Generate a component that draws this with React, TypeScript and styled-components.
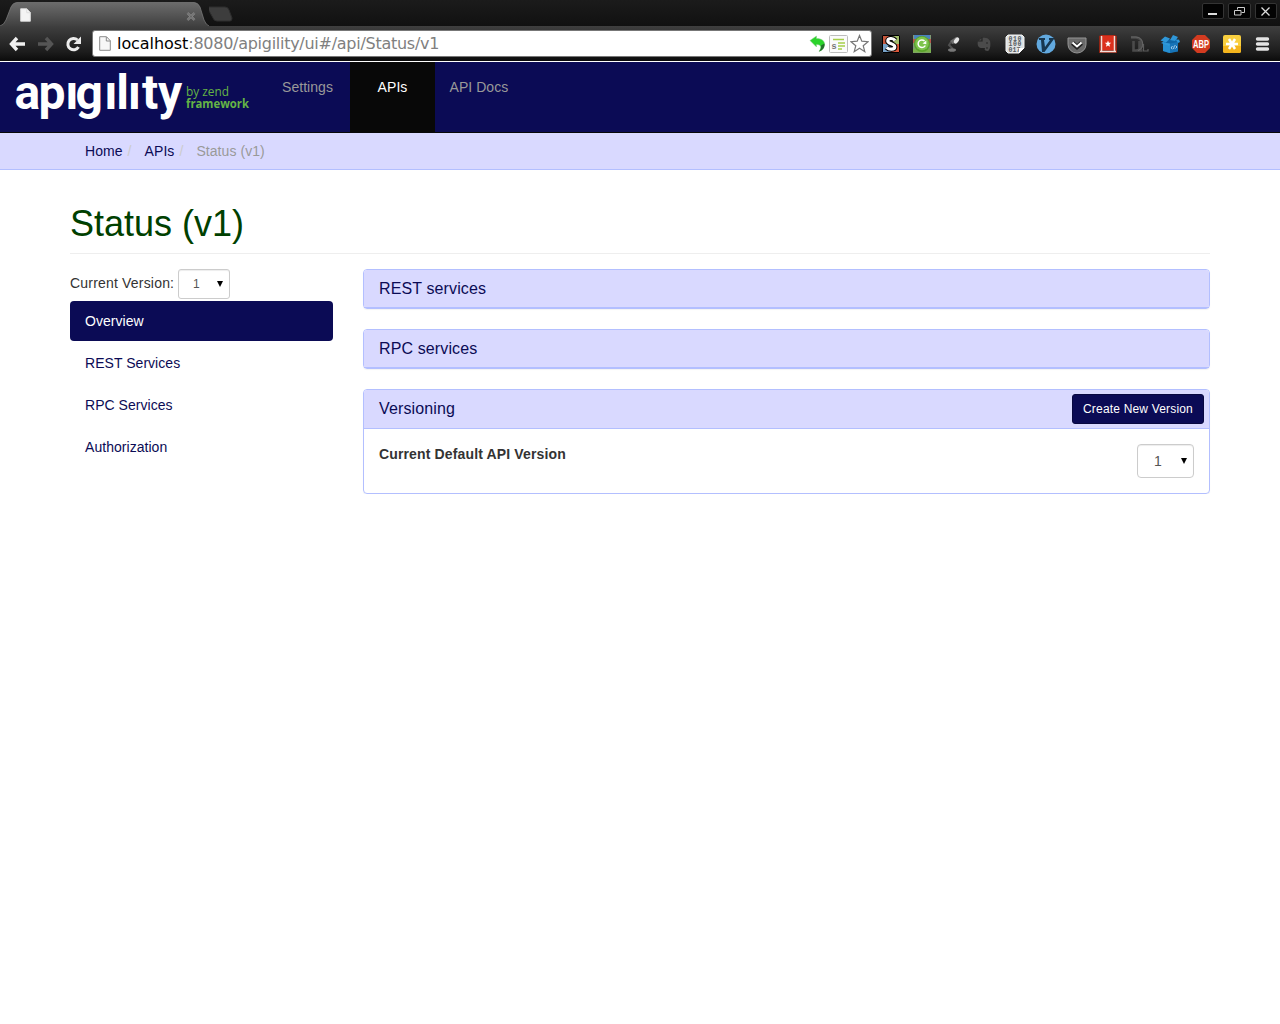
import React from "react";
import styled, { createGlobalStyle, css } from "styled-components";

const navy = "#0b0b55";
const lilac = "#d9d9ff";
const edge = "#b3bfff";

const GlobalStyle = createGlobalStyle`
  *, *::before, *::after { box-sizing: border-box; }
  body {
    margin: 0;
    background: #fff;
    color: #333;
    font: 14px/20px "Liberation Sans", Arial, sans-serif;
  }
  a { text-decoration: none; color: ${navy}; }
  svg { display: block; flex: none; }
`;

/* ---------- browser window ---------- */

const TabStrip = styled.div`
  display: flex;
  justify-content: space-between;
  height: 26px;
  background: linear-gradient(#1b1b1b, #111);
`;
const TabGroup = styled.div`
  display: flex;
`;
const Tab = styled.div`
  position: relative;
  width: 209px;
  height: 26px;
`;
const TabContent = styled.div`
  position: absolute;
  inset: 0;
  display: flex;
  justify-content: space-between;
  padding: 8px 13px 0 20px;
`;
const WindowButtons = styled.div`
  display: flex;
  gap: 4px;
  padding: 3px 3px 0 0;
`;
const WindowButton = styled.div`
  display: flex;
  align-items: center;
  justify-content: center;
  width: 22.5px;
  height: 16px;
  border: 1px solid #343434;
  border-radius: 2px;
  background: #030303;
`;
const Toolbar = styled.div`
  display: flex;
  height: 36px;
  padding: 4px 0 0 8px;
  background: linear-gradient(#3f3f3f, #1c1c1c 26px, #0d0d0d 34px);
  border-bottom: 1px solid #fff;
`;
const ToolbarButtons = styled.div`
  display: flex;
  gap: 8px;
  width: 84px;
  padding-top: 4px;
`;
const AddressBar = styled.div`
  display: flex;
  align-items: center;
  width: 780px;
  height: 27px;
  padding: 0 2px 0 6px;
  background: #fff;
  border: 1px solid #777;
  border-radius: 3px;
  font: 16px "DejaVu Sans", sans-serif;
  color: #808080;
`;
const Url = styled.div`
  flex: 1;
  padding: 0 0 1px 6px;
  white-space: nowrap;
  letter-spacing: -0.27px;
`;
const Host = styled.span`
  color: #000;
  letter-spacing: -0.06px;
`;
const AddressActions = styled.div`
  display: flex;
  gap: 2px;
`;
const Extensions = styled.div`
  display: flex;
  margin-left: 3px;
`;
const ExtensionSlot = styled.div`
  display: flex;
  justify-content: center;
  width: 31px;
  padding-top: 3.5px;
`;

/* ---------- application ---------- */

const NavBar = styled.nav`
  display: flex;
  height: 71px;
  background: ${navy};
  border-bottom: 1px solid #080808;
`;
const Brand = styled.a`
  width: 267px;
`;
const NavItem = styled.a<{ $active?: boolean }>`
  padding: 15px;
  color: #999;
  letter-spacing: 0.05px;
  ${(p) =>
    p.$active &&
    css`
      width: 85px;
      margin-left: 1.5px;
      padding: 15px 0 15px 1px;
      text-align: center;
      color: #fff;
      background: #080808;
    `}
`;
const BreadcrumbBar = styled.div`
  height: 37px;
  padding: 8px 85px;
  background: ${lilac};
  border-bottom: 1px solid ${edge};
`;
const Breadcrumbs = styled.div`
  display: flex;
  letter-spacing: 0.06px;
`;
const Separator = styled.span`
  width: 22px;
  padding-left: 5px;
  color: #ccc;
`;
const Current = styled.span`
  color: #999;
`;
const Page = styled.main`
  width: 1140px;
  margin: 0 auto;
`;
const Title = styled.h1`
  height: 84px;
  margin: 0 0 15px;
  padding-top: 34px;
  border-bottom: 1px solid #eee;
  font-size: 36px;
  line-height: 40px;
  font-weight: 500;
  color: #004000;
`;
const Columns = styled.div`
  display: grid;
  grid-template-columns: 263px 847px;
  column-gap: 30px;
`;
const VersionRow = styled.div`
  display: flex;
  height: 32px;
  line-height: 28px;
`;
const VersionLabel = styled.span`
  width: 108px;
  letter-spacing: 0.19px;
`;
const SelectBox = styled.div<{ $small?: boolean }>`
  display: flex;
  align-items: center;
  justify-content: space-between;
  width: ${(p) => (p.$small ? 52 : 57)}px;
  height: ${(p) => (p.$small ? 30 : 34)}px;
  padding: 0 5px 0 ${(p) => (p.$small ? 14 : 16)}px;
  border: 1px solid #ccc;
  border-radius: ${(p) => (p.$small ? 3 : 4)}px;
  box-shadow: inset 0 1px 1px rgba(0, 0, 0, 0.075);
  font-size: ${(p) => (p.$small ? 12 : 14)}px;
  line-height: 20px;
  color: #555;
  background: #fff;
`;
const SideNav = styled.nav`
  display: flex;
  flex-direction: column;
  gap: 2px;
`;
const SideLink = styled.a<{ $active?: boolean }>`
  padding: 10px 15px;
  border-radius: 4px;
  letter-spacing: 0.04px;
  ${(p) => p.$active && css`color: #fff; background: ${navy};`}
`;
const Panels = styled.div`
  display: flex;
  flex-direction: column;
  gap: 20px;
`;
const Panel = styled.section`
  border: 1px solid ${edge};
  border-radius: 4px;
  box-shadow: 0 1px 1px rgba(0, 0, 0, 0.05);
`;
const PanelHeading = styled.header<{ $tall?: boolean }>`
  display: flex;
  justify-content: space-between;
  height: ${(p) => (p.$tall ? 39 : 38)}px;
  padding: 4px 5px 0 15px;
  background: ${lilac};
  border-bottom: 1px solid ${edge};
  border-radius: 3px 3px 0 0;
`;
const PanelTitle = styled.h3`
  margin: 0;
  font-size: 16px;
  line-height: 29px;
  font-weight: 500;
  letter-spacing: 0.12px;
  color: ${navy};
`;
const PrimaryButton = styled.button`
  width: 132px;
  height: 30px;
  padding: 0;
  border: 1px solid #080840;
  border-radius: 3px;
  background: ${navy};
  color: #fff;
  font: 12px/18px "Liberation Sans", Arial, sans-serif;
  letter-spacing: 0.18px;
`;
const PanelBody = styled.div`
  display: flex;
  justify-content: space-between;
  padding: 15px;
  font-weight: bold;
  letter-spacing: 0.14px;
`;
const PanelValue = styled.div`
  font-weight: normal;
`;

const PageIcon = ({ w, h, fill, stroke }: { w: number; h: number; fill: string; stroke: string }) => (
  <svg width={w} height={h} viewBox="0 0 12 15">
    <path d="M.7.7h6.800l3.800 4v9.600H.7z" fill={fill} stroke={stroke} />
    <path d="M7.300 1v4h4" fill="none" stroke={stroke} />
  </svg>
);

const Caret = () => (
  <svg width="8" height="8" viewBox="0 0 8 8">
    <path d="M1 1h6L4 7z" fill="#000" />
  </svg>
);

const Select = ({ value, small }: { value: string; small?: boolean }) => (
  <SelectBox $small={small} role="listbox">
    {value}
    <Caret />
  </SelectBox>
);

const Ext = ({ children }: { children: React.ReactNode }) => (
  <ExtensionSlot>
    <svg width="20" height="20" viewBox="0 0 20 20">
      {children}
    </svg>
  </ExtensionSlot>
);

const sans = '"Liberation Sans", Arial, sans-serif';

const ExtensionIcons = () => (
  <Extensions>
    <Ext>
      <path d="M1 1h9v9H1z" fill="#c4573c" />
      <path d="M10 1h9v9h-9z" fill="#a3bd6c" />
      <path d="M1 10h9v9H1z" fill="#78a3c9" />
      <path d="M10 10h9v9h-9z" fill="#d9573a" />
      <path d="M1.500 1.500h17v17h-17z" fill="none" stroke="#000" />
      <path d="M14 6.500C12 3.500 6.500 4 6.800 7.200c.3 3 7 2.300 7 5.600 0 3.200-5.800 3-8 .7" fill="none" stroke="#000" strokeWidth="5.200" />
      <path d="M14 6.500C12 3.500 6.500 4 6.800 7.200c.3 3 7 2.300 7 5.600 0 3.200-5.800 3-8 .7" fill="none" stroke="#fff" strokeWidth="3.200" />
    </Ext>
    <Ext>
      <path d="M1 1h18v18H1z" fill="#7f9a74" />
      <path d="M2 1h16v5H2z" fill="#4a83bd" />
      <path d="M1 5h3v4H1zM16 5h3v4h-3z" fill="#b6574c" />
      <path d="M1 15h18v3.500H1z" fill="#79b14a" />
      <circle cx="10" cy="10" r="8" fill="#5aa32c" />
      <circle cx="10" cy="9.500" r="6.800" fill="#7dc44c" />
      <path d="M13.300 11.500a3.800 3.800 0 1 1-.8-4.600" fill="none" stroke="#fff" strokeWidth="1.500" />
      <path d="M10.500 9.500l3.800.8V6.500z" fill="#fff" />
    </Ext>
    <Ext>
      <path d="M7 7l6-4 2 1-2 5-4 1z" fill="#6c6c6c" />
      <ellipse cx="13.500" cy="6.500" rx="2" ry="3.500" transform="rotate(35 13.500 6.500)" fill="#e6e6e6" />
      <path d="M8 8l-2 3 4 4" fill="none" stroke="#505050" strokeWidth="2" />
      <ellipse cx="9" cy="16" rx="4" ry="1.800" fill="#777" />
    </Ext>
    <Ext>
      <path d="M4 7l4-3c3-1 7 0 8 3 1 4 0 9-2 10-3 0-4-1-3-3H7c-3 0-4-4-3-7z" fill="#4b4b4b" />
      <path d="M4 7h4V3.500M12 9h2M12 14h2" stroke="#242424" fill="none" strokeWidth="1.200" />
    </Ext>
    <Ext>
      <path d="M3 1h14l2 2v11l-5 5H3l-2-2V3z" fill="#dde1e3" stroke="#f3f3f3" />
      <g fontFamily='"Liberation Mono", monospace' fontWeight="bold" fontSize="6.500" fill="#565b60">
        <text x="3.500" y="6.500" textLength="13">010</text>
        <text x="3.500" y="12" textLength="13">100</text>
        <text x="3.500" y="17.500" textLength="12">017</text>
      </g>
      <path d="M19 14l-5 5v-5z" fill="#fff" />
    </Ext>
    <Ext>
      <circle cx="10" cy="10" r="9.500" fill="#62a9df" />
      <path d="M3 4h6v2H8l1 7 5-7h-1V4h5v1L8.500 18H6L5 6H3z" fill="#173750" />
    </Ext>
    <Ext>
      <path d="M1 4h18v6.500a9 8.500 0 0 1-18 0z" fill="#6a6a6a" stroke="#969696" />
      <path d="M5.500 9l4.500 4 4.500-4" fill="none" stroke="#222" strokeWidth="4.500" />
      <path d="M5.500 8.500l4.500 4 4.500-4" fill="none" stroke="#fff" strokeWidth="2" />
    </Ext>
    <Ext>
      <path d="M1 2l2-1h14l2 1v17H1z" fill="#912313" />
      <path d="M3 1.500h14V16H3z" fill="#db301d" />
      <path d="M3.500 2v15M16.500 2v15M2 17.500h16" stroke="#f2dfd9" strokeWidth="1.500" />
      <path d="M10 6.500l.9 2.200 2.400.1-1.900 1.500.6 2.400-2-1.300-2 1.300.6-2.400-1.900-1.500 2.400-.1z" fill="#fff" />
    </Ext>
    <Ext>
      <path d="M2 3.500h5c8 0 8 13 0 13H4.500V7M10.500 7v9.500h3" fill="none" stroke="#4b4b4b" strokeWidth="2.600" />
      <path d="M2 3h5c8 0 9 12 2 13.500" fill="none" stroke="#747474" strokeWidth=".7" />
      <path d="M14.500 10v7H19v-2" fill="none" stroke="#5c5c5c" strokeWidth="1.200" />
    </Ext>
    <Ext>
      <path d="M3 7l3-3 5 2 6-2 1 4v9l-9 2-6-2z" fill="#0f65a5" />
      <path d="M3 8.500l7 1V19l-7-2z" fill="#2790d2" />
      <path d="M10 9.500l8-1.500v9.500L10 19z" fill="#1774b8" />
      <path d="M.5 6.500L5 2.500l5 2-4 4zM10 6l3-5 5 2-3 4zM16 6l3-.5L20 8l-2 1zM1 9l2-1 7 2-1 2z" fill="#2f97d8" />
      <path d="M12.500 12L11 14l1.500 1M15.500 11.500l1.500 1.500-1.500 1.500M14.500 11.500l-1 3.500" fill="none" stroke="#dff2ff" strokeWidth=".7" />
    </Ext>
    <Ext>
      <path d="M6 1h8l5 5v8l-5 5H6l-5-5V6z" fill="#d33b20" />
      <text x="2" y="13.500" textLength="16" lengthAdjust="spacingAndGlyphs" fontFamily={sans} fontWeight="bold" fontSize="10" fill="#fff">ABP</text>
    </Ext>
    <Ext>
      <rect x="1" y="1" width="18" height="18" rx="2" fill="#f9cf3f" />
      <path d="M1 12h18v5a2 2 0 0 1-2 2H3a2 2 0 0 1-2-2z" fill="#f4b51d" />
      <path d="M4 10h12M7 5l6 10M13 5L7 15" stroke="#fff" strokeWidth="2.500" />
    </Ext>
    <Ext>
      <path d="M4.500 5h10M4.500 10h10M4.500 15h10" stroke="#e4e4e4" strokeWidth="3.400" strokeLinecap="round" />
    </Ext>
  </Extensions>
);

const Browser = () => (
  <>
    <TabStrip>
      <TabGroup>
        <Tab>
          <svg width="209" height="26">
            <defs>
              <linearGradient id="tab" x1="0" y1="0" x2="0" y2="1">
                <stop offset="0" stopColor="#6c6c6c" />
                <stop offset="1" stopColor="#404040" />
              </linearGradient>
            </defs>
            <path d="M0 26q4-1 6-6l5-13q2-4.500 6-4.500h177q4 0 6 4.500l4 13q2 5 5 6z" fill="url(#tab)" />
            <path d="M0 26q4-1 6-6l5-13q2-4.500 6-4.500h177q4 0 6 4.500l4 13q2 5 5 6" fill="none" stroke="#777" strokeWidth=".8" />
          </svg>
          <TabContent>
            <PageIcon w={11} h={14} fill="#f4f4f4" stroke="#ddd" />
            <svg width="10" height="16" viewBox="0 0 10 16">
              <path d="M1.500 5l7 7M8.500 5l-7 7" stroke="#919191" strokeWidth="2.400" />
              <path d="M1.500 5l7 7M8.500 5l-7 7" stroke="#555" strokeWidth=".9" />
            </svg>
          </TabContent>
        </Tab>
        <svg width="24" height="26">
          <path d="M0 7h16q3 0 4 3l3 8q0 3-2 3H8q-3 0-4-3L-1 9q-1-2 1-2z" fill="#3d3d3d" stroke="#2e2e2e" />
        </svg>
      </TabGroup>
      <WindowButtons>
        <WindowButton>
          <svg width="11" height="11"><path d="M1 8h9" stroke="#ddd" strokeWidth="2" /></svg>
        </WindowButton>
        <WindowButton>
          <svg width="11" height="11"><path d="M3.500 3.500v-2h7v5h-3M.5 4.500h6.500v4.500H.5z" fill="none" stroke="#ccc" /></svg>
        </WindowButton>
        <WindowButton>
          <svg width="11" height="11"><path d="M1.500 1.500l8 8M9.500 1.500l-8 8" stroke="#ddd" strokeWidth="1.300" /></svg>
        </WindowButton>
      </WindowButtons>
    </TabStrip>
    <Toolbar>
      <ToolbarButtons>
        <svg width="20" height="20">
          <path d="M9 4L3.500 10 9 16M4 10h13" fill="none" stroke="#f0f0f0" strokeWidth="3.400" />
        </svg>
        <svg width="20" height="20">
          <path d="M10 4l5.500 6-5.500 6M2 10h13" fill="none" stroke="#555" strokeWidth="3.400" />
        </svg>
        <svg width="20" height="20">
          <path d="M14.500 13A5.700 5.700 0 1 1 13.500 6" fill="none" stroke="#ececec" strokeWidth="3" />
          <path d="M17 2.500V10H9.500z" fill="#ececec" />
        </svg>
      </ToolbarButtons>
      <AddressBar>
        <PageIcon w={12} h={15} fill="#f7f7f7" stroke="#8a8a8a" />
        <Url><Host>localhost</Host>:8080/apigility/ui#/api/Status/v1</Url>
        <AddressActions>
          <svg width="18" height="20">
            <path d="M1 6.500L7.500 2v2.500C13 4.500 16 7 15.500 11c-.5 3.500-2.500 5.500-5.500 6.500 2.500-3.500 2.500-7-2.500-7V13z" fill="#2bd32b" stroke="#8fce8f" strokeWidth=".5" />
            <path d="M15.500 9.500c.5 4-2 7-5.500 8 2-2.500 2.500-4 2-6z" fill="#23702a" />
          </svg>
          <svg width="19" height="20">
            <rect x=".5" y="1.500" width="18" height="17" rx="1" fill="#fbfbfb" stroke="#bcbcbc" />
            <path d="M4 5.500h11M9 9h7M9 12h7M9 15h4" stroke="#a6cf49" strokeWidth="1.700" />
            <text x="2.500" y="15" fontFamily={sans} fontWeight="bold" fontSize="9" fill="#777">s</text>
          </svg>
          <svg width="19" height="20">
            <path d="M9.500 1.500l2.300 5.700 6.200.5-4.800 4 1.600 6-5.300-3.400-5.300 3.400 1.600-6-4.800-4 6.200-.5z" fill="#fff" stroke="#777" strokeWidth="1.200" />
          </svg>
        </AddressActions>
      </AddressBar>
      <ExtensionIcons />
    </Toolbar>
  </>
);

const Logo = () => (
  <svg width="267" height="70">
    <text
      x="14.500 38.500 65.500 75.500 104.500 116.300 128 142 158"
      y="47"
      fontFamily="Roboto, sans-serif"
      fontWeight="700"
      fontSize="48"
      fill="#fff"
    >
      apigility
    </text>
    {/* the wordmark's i has no dot */}
    <path d="M66 8h11v12.500H66zM105 8h11v12.500h-11zM129 8h10v12.500h-10z" fill={navy} />
    <g fontFamily='"Open Sans", sans-serif' fill="#64b445">
      <text x="186" y="34" textLength="43" lengthAdjust="spacingAndGlyphs" fontSize="13">by zend</text>
      <text x="186" y="46" textLength="63" lengthAdjust="spacingAndGlyphs" fontSize="13" fontWeight="700">framework</text>
    </g>
  </svg>
);

export default function App() {
  return (
    <>
      <GlobalStyle />
      <Browser />
      <NavBar>
        <Brand href="#"><Logo /></Brand>
        <NavItem href="#">Settings</NavItem>
        <NavItem href="#" $active>APIs</NavItem>
        <NavItem href="#">API Docs</NavItem>
      </NavBar>
      <BreadcrumbBar>
        <Breadcrumbs>
          <a href="#">Home</a>
          <Separator>/</Separator>
          <a href="#">APIs</a>
          <Separator>/</Separator>
          <Current>Status (v1)</Current>
        </Breadcrumbs>
      </BreadcrumbBar>
      <Page>
        <Title>Status (v1)</Title>
        <Columns>
          <div>
            <VersionRow>
              <VersionLabel>Current Version:</VersionLabel>
              <Select value="1" small />
            </VersionRow>
            <SideNav>
              <SideLink href="#" $active>Overview</SideLink>
              <SideLink href="#">REST Services</SideLink>
              <SideLink href="#">RPC Services</SideLink>
              <SideLink href="#">Authorization</SideLink>
            </SideNav>
          </div>
          <Panels>
            <Panel>
              <PanelHeading><PanelTitle>REST services</PanelTitle></PanelHeading>
            </Panel>
            <Panel>
              <PanelHeading><PanelTitle>RPC services</PanelTitle></PanelHeading>
            </Panel>
            <Panel>
              <PanelHeading $tall>
                <PanelTitle>Versioning</PanelTitle>
                <PrimaryButton>Create New Version</PrimaryButton>
              </PanelHeading>
              <PanelBody>
                Current Default API Version
                <PanelValue><Select value="1" /></PanelValue>
              </PanelBody>
            </Panel>
          </Panels>
        </Columns>
      </Page>
    </>
  );
}
